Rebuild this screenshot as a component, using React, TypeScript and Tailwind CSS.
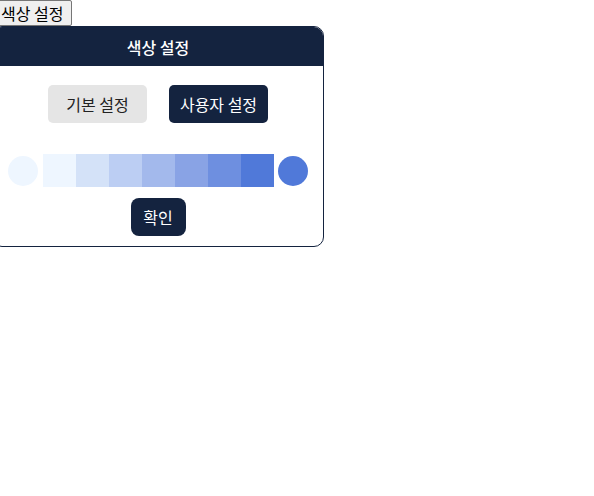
const shades = ['#eef6ff', '#d4e2f8', '#bccef3', '#a3b9ec', '#89a3e5', '#6e8fe0', '#5079d9'];

export default function App() {
  return (
    <div className="-ml-[8px] font-['Noto_Sans_CJK_KR','Noto_Sans',sans-serif]">
      <button className="block h-[26px] px-[8px] text-[16px] leading-[22px] text-black bg-[#efefef] border border-[#767676] rounded-[2px]">
        색상 설정
      </button>

      <div className="w-[332px] h-[221px] bg-white border border-[#14233f] rounded-[10px] overflow-hidden flex flex-col">
        <div className="h-[39px] bg-[#14233f] flex items-center justify-center text-white text-[16px] font-medium">
          색상 설정
        </div>

        <div className="flex-1 flex flex-col items-center">
          <div className="flex gap-[22px] mt-[19px]">
            <button className="w-[99px] h-[38px] rounded-[5px] bg-[#e5e5e5] text-[#222] text-[16px]">기본 설정</button>
            <button className="w-[99px] h-[38px] rounded-[5px] bg-[#14233f] text-white text-[16px]">사용자 설정</button>
          </div>

          <div className="flex items-center mt-[31px]">
            <div className="w-[30px] h-[30px] rounded-full bg-[#eef6ff]" />
            <div className="flex ml-[5px]">
              {shades.map(c => (
                <div key={c} className="w-[33px] h-[33px]" style={{ backgroundColor: c }} />
              ))}
            </div>
            <div className="w-[30px] h-[30px] rounded-full bg-[#5079d9] ml-[4px]" />
          </div>

          <button className="mt-[11px] w-[55px] h-[38px] rounded-[8px] bg-[#14233f] text-white text-[16px]">확인</button>
        </div>
      </div>
    </div>
  );
}
